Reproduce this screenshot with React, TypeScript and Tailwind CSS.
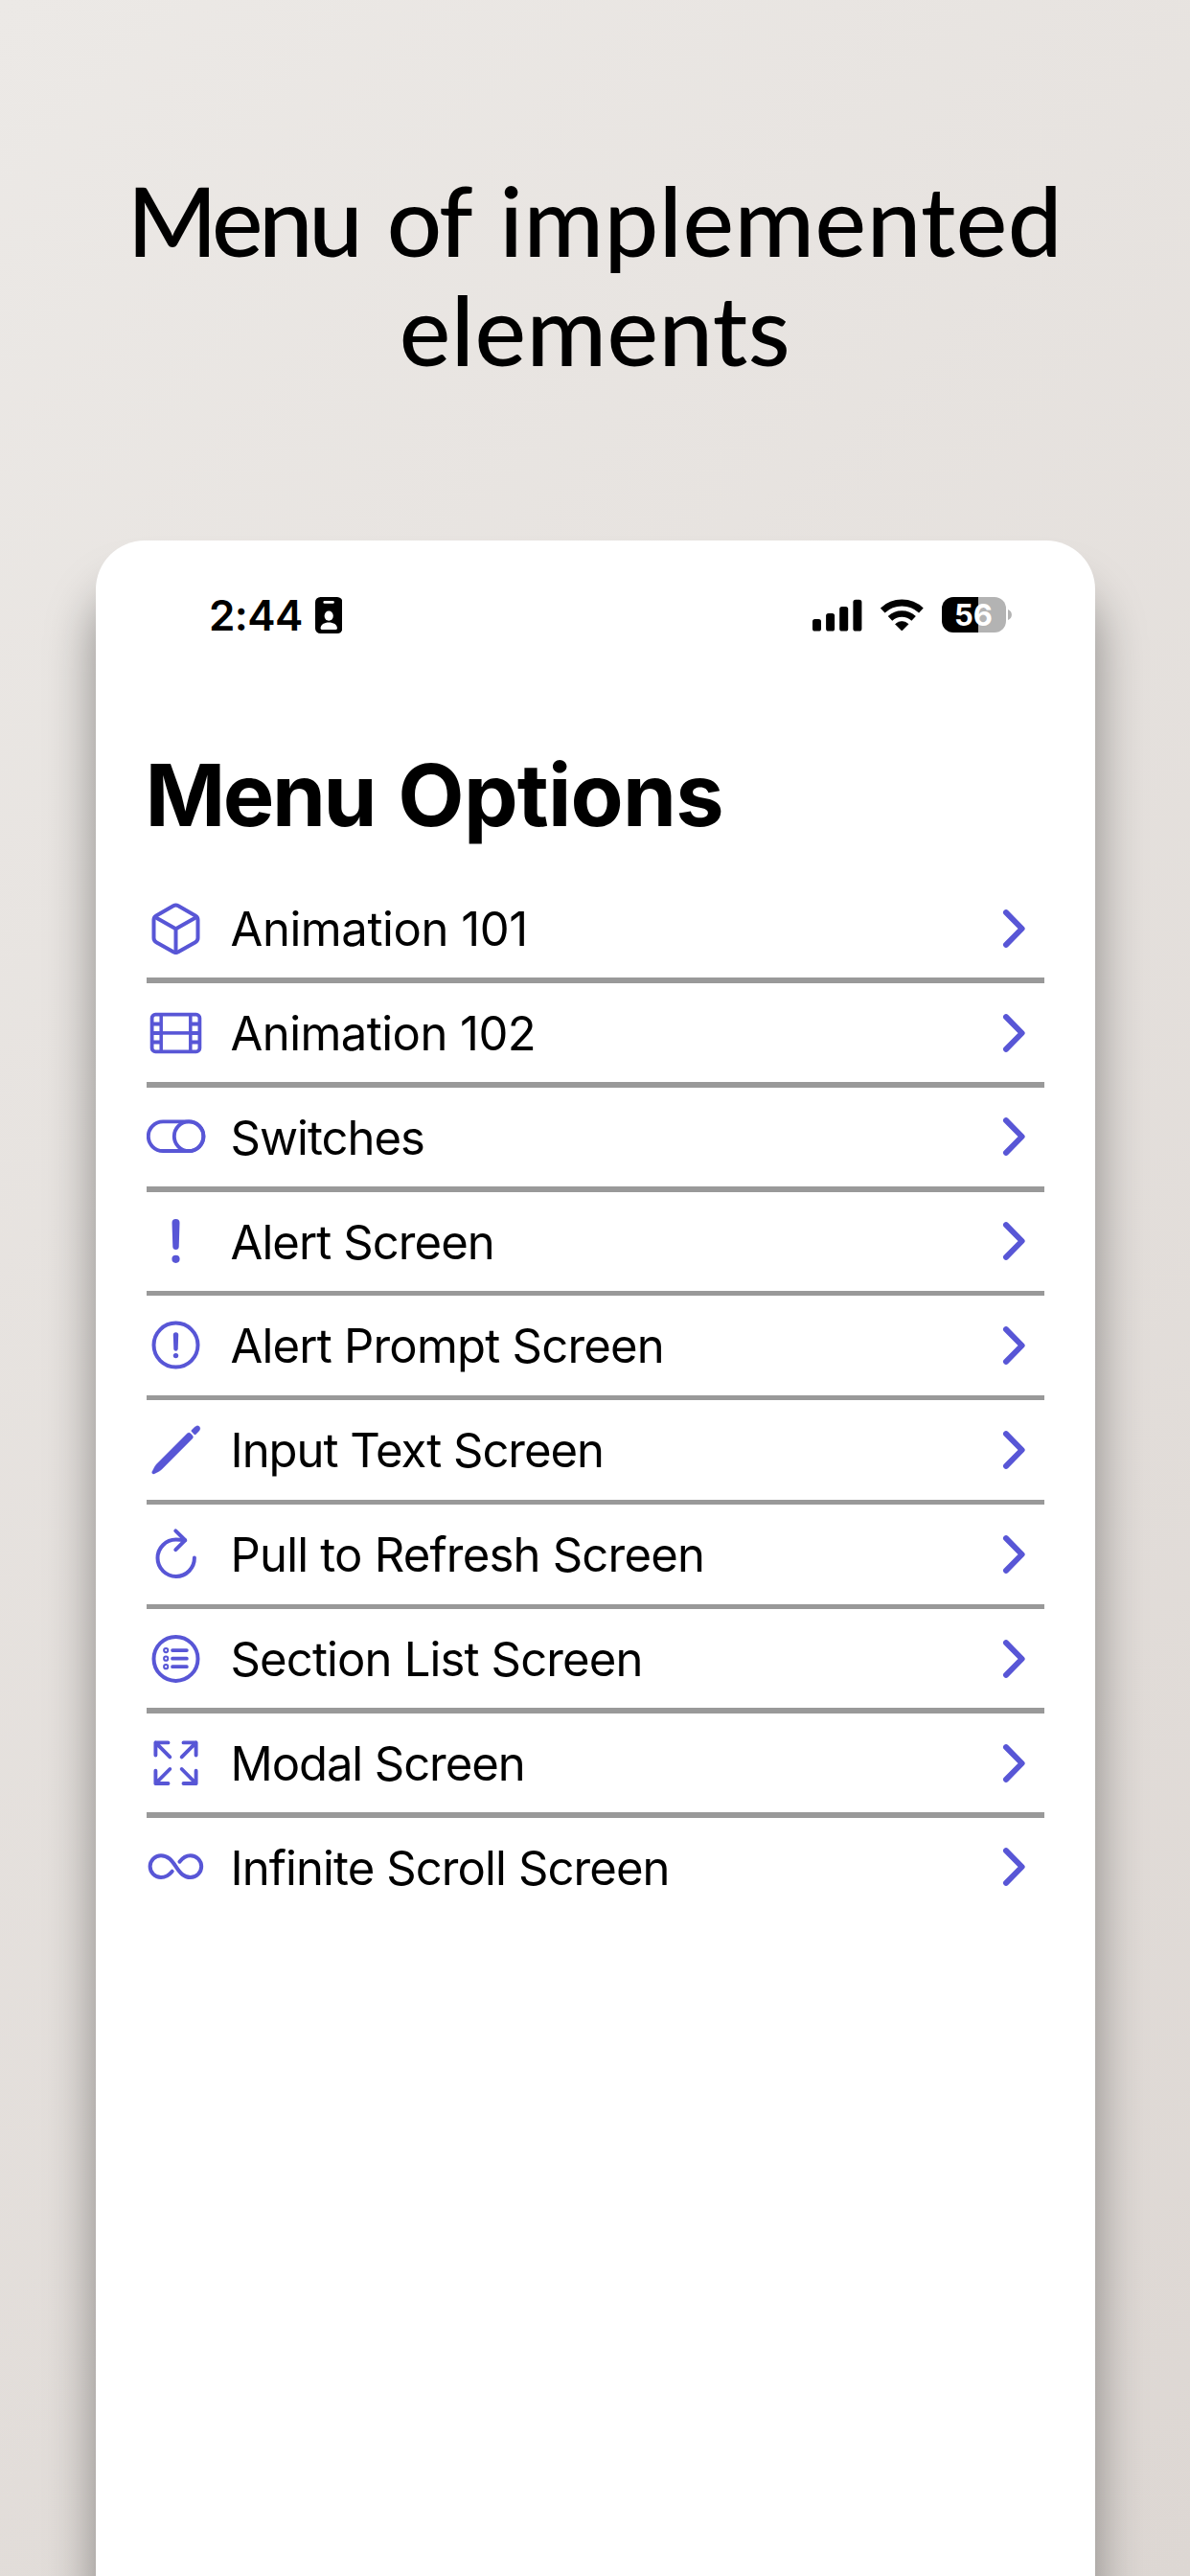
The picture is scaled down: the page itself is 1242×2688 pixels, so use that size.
import type { ReactNode } from "react";

const CubeIcon = () => (
  <g strokeWidth="4" strokeLinejoin="round" strokeLinecap="round">
    <path d="M28.4 7.2Q31 5.7 33.6 7.2L51.4 17.4Q54 18.9 54 21.8V40.8Q54 43.7 51.4 45.2L33.6 55.3Q31 56.7 28.4 55.3L10.6 45.2Q8 43.7 8 40.8V21.8Q8 18.9 10.6 17.4Z" />
    <path d="M9.4 18.9L31 31.3L52.6 18.9M31 31.3V56" />
  </g>
);

const FilmIcon = () => (
  <g>
    <rect x="6.1" y="11.7" width="49.8" height="38.6" rx="3.6" strokeWidth="3.8" />
    <path d="M15.7 12V50M46.3 12V50" strokeWidth="3.5" />
    <path d="M16 30.9H46" strokeWidth="3.6" />
    <path
      d="M6 21.5H16M6 30.9H16M6 40.4H16M46 21.5H56M46 30.9H56M46 40.4H56"
      strokeWidth="4"
    />
  </g>
);

const SwitchIcon = () => (
  <g strokeWidth="3.9">
    <rect x="2.3" y="15.4" width="57.6" height="30.6" rx="15.3" />
    <circle cx="44.6" cy="30.7" r="15.3" />
  </g>
);

const ExclamationIcon = () => (
  <g fill="currentColor" stroke="none">
    <path d="M27 12Q27 8 31 8Q35 8 35 12L34.2 37Q34 40 31 40Q28 40 27.8 37Z" />
    <circle cx="31" cy="49.8" r="4.1" />
  </g>
);

const ExclamationCircleIcon = () => (
  <g>
    <circle cx="31" cy="30.6" r="23" strokeWidth="4" />
    <g fill="currentColor" stroke="none">
      <path d="M28.3 19.8Q28.3 17.2 31 17.2Q33.7 17.2 33.7 19.8L33.2 34.8Q33 36.8 31 36.8Q29 36.8 28.8 34.8Z" />
      <circle cx="31" cy="41.6" r="2.7" />
    </g>
  </g>
);

const PencilIcon = () => (
  <g fill="currentColor" stroke="currentColor" strokeWidth="0.4">
    <path d="M43.2 13.6L11 45.8Q9.5 47.3 8.6 49.3L6.2 54Q5.8 56.3 8.2 55.9L13.2 53.4Q15 52.5 16.5 51L48.4 18.9Q49.6 17.4 48.2 15.8L46.6 14Q44.8 12.3 43.2 13.6Z" />
    <path d="M47.6 10.3L50.6 7.2Q53.5 4.6 55.5 6.5Q57.5 8.8 54.9 11.6L52 14.6Q51 15.3 50.1 14.4L47.7 12Q46.8 11.1 47.6 10.3Z" />
  </g>
);

const RefreshIcon = () => (
  <g strokeWidth="4" strokeLinecap="round" strokeLinejoin="round">
    <path d="M50.4 34.6A19.2 19.2 0 1 1 31.2 15.6Q35 15.6 40.6 16.2" />
    <path d="M30.8 6.4L40.8 16.2L30.8 26.2" />
  </g>
);

const ListCircleIcon = () => (
  <g>
    <circle cx="31" cy="30.9" r="23" strokeWidth="4" />
    <g strokeWidth="2">
      <circle cx="20.7" cy="22.1" r="2.1" />
      <circle cx="20.7" cy="30.7" r="2.1" />
      <circle cx="20.7" cy="39.2" r="2.1" />
    </g>
    <path
      d="M27.5 22.1H42.4M27.5 30.7H42.4M27.5 39.2H42.4"
      strokeWidth="3.7"
      strokeLinecap="round"
    />
  </g>
);

const ExpandIcon = () => (
  <g strokeWidth="3.9" strokeLinecap="round" strokeLinejoin="round">
    <path d="M9.9 22.6V9.4H23M9.9 9.4L24.8 24.4" />
    <path d="M52.1 22.6V9.4H39M52.1 9.4L37.2 24.4" />
    <path d="M9.9 38.8V52H23M9.9 52L24.8 37" />
    <path d="M52.1 38.8V52H39M52.1 52L37.2 37" />
  </g>
);

const InfinityIcon = () => (
  <path
    d="M34.9 25.7C38 21.6 41.5 19.2 46.3 19.2A11.4 11.4 0 0 1 46.3 42C39.3 42 35.5 37.4 31 30.6C26.5 23.8 22.7 19.2 15.5 19.2A11.4 11.4 0 0 0 15.5 42C20.3 42 24 39.6 27.2 35.7"
    strokeWidth="4"
    strokeLinecap="round"
  />
);

type Item = { label: string; icon: ReactNode; tracking: string };

const items: Item[] = [
  { label: "Animation 101", icon: <CubeIcon />, tracking: "tracking-[-0.43px]" },
  { label: "Animation 102", icon: <FilmIcon />, tracking: "tracking-[-0.55px]" },
  { label: "Switches", icon: <SwitchIcon />, tracking: "tracking-[-1px]" },
  { label: "Alert Screen", icon: <ExclamationIcon />, tracking: "tracking-[-0.92px]" },
  { label: "Alert Prompt Screen", icon: <ExclamationCircleIcon />, tracking: "tracking-[-0.79px]" },
  { label: "Input Text Screen", icon: <PencilIcon />, tracking: "tracking-[-1.02px]" },
  { label: "Pull to Refresh Screen", icon: <RefreshIcon />, tracking: "tracking-[-0.79px]" },
  { label: "Section List Screen", icon: <ListCircleIcon />, tracking: "tracking-[-0.86px]" },
  { label: "Modal Screen", icon: <ExpandIcon />, tracking: "tracking-[-1.08px]" },
  { label: "Infinite Scroll Screen", icon: <InfinityIcon />, tracking: "tracking-[-0.9px]" },
];

function StatusBar() {
  return (
    <div className="mt-[45px] flex h-[65px] items-center justify-between pr-[86.5px] pl-[118.5px]">
      <div className="flex items-center">
        <span className="w-[110.5px] text-[44px] leading-none font-semibold tracking-[-0.6px]">
          2:44
        </span>
        <svg width="28.5" height="38" viewBox="0 0 28.5 38">
          <rect width="28.5" height="38" rx="5.5" fill="#000" />
          <rect x="8.4" y="4" width="11.4" height="2.8" rx="1.3" fill="#fff" />
          <ellipse cx="14.2" cy="19.7" rx="4.6" ry="5.1" fill="#fff" />
          <path
            d="M5.6 32.4C5.6 28.6 9.4 26.4 14.2 26.4S22.9 28.6 22.9 32.4Q22.9 34 21.2 34H7.3Q5.6 34 5.6 32.4Z"
            fill="#fff"
          />
        </svg>
      </div>
      <div className="flex items-center gap-[19px]">
        <svg width="52" height="34" viewBox="0 0 52 34">
          <rect x="0" y="21" width="9" height="12.5" rx="2.6" />
          <rect x="14.1" y="15" width="9" height="18.5" rx="2.6" />
          <rect x="28.2" y="8" width="9" height="25.5" rx="2.6" />
          <rect x="42.4" y="0.8" width="9" height="32.7" rx="2.6" />
        </svg>
        <svg width="45" height="34" viewBox="0 0 45 34" fill="none" stroke="#000">
          <path d="M2.2 12A29.3 29.3 0 0 1 42.4 12" strokeWidth="6.8" />
          <path d="M10 20.3A17.9 17.9 0 0 1 34.6 20.3" strokeWidth="6.5" />
          <path
            d="M22.3 33L15.6 26.3A9.6 9.6 0 0 1 29 26.3Z"
            fill="#000"
            strokeWidth="0.8"
            strokeLinejoin="round"
          />
        </svg>
        <div className="flex items-center gap-[2.5px]">
          <div className="flex h-[36.5px] w-[67px] items-center justify-center rounded-[12px] bg-[linear-gradient(90deg,#000_56.5%,#b3b3b3_56.5%)] text-[31px] leading-none font-bold text-white">
            56
          </div>
          <svg width="4" height="11" viewBox="0 0 4 11">
            <path d="M0 0Q3.9 1.8 3.9 5.5T0 11Z" fill="#b3b3b3" />
          </svg>
        </div>
      </div>
    </div>
  );
}

function MenuRow({ item, last }: { item: Item; last: boolean }) {
  return (
    <li>
      <div className="flex h-[103.4px] items-center pr-[19px]">
        <svg
          width="62"
          height="62"
          viewBox="0.5 0 62 62"
          fill="none"
          stroke="currentColor"
          className="shrink-0 text-[#5856d6]"
        >
          {item.icon}
        </svg>
        <span
          className={`ml-[26px] flex-1 pt-[1.5px] text-[49px] leading-none whitespace-nowrap ${item.tracking}`}
        >
          {item.label}
        </span>
        <svg width="25" height="42" viewBox="0 0 25 42" fill="none" className="text-[#5856d6]">
          <path
            d="M4 4.2L20.6 21L4 37.8"
            stroke="currentColor"
            strokeWidth="6"
            strokeLinecap="round"
            strokeLinejoin="round"
          />
        </svg>
      </div>
      {!last && <div className="h-[5.47px] bg-[#999999]" />}
    </li>
  );
}

export default function App() {
  return (
    <div className="flex h-[2688px] w-[1242px] flex-col overflow-hidden bg-[linear-gradient(135deg,#ece9e6,#ddd7d3)] text-black">
      <h1 className="flex flex-col items-center pt-[172px] font-['Lato',sans-serif] text-[101px] leading-[114px] font-medium whitespace-nowrap">
        <span className="[word-spacing:4px]">
          <span className="tracking-[-4.4px]">Menu</span>{" "}
          <span className="tracking-[-2px]">of</span>{" "}
          <span className="tracking-[0.56px]">implemented</span>
        </span>
        <span className="tracking-[0.5px]">elements</span>
      </h1>
      <main className="mx-[99.5px] mt-[164px] flex-1 rounded-t-[51px] bg-white font-['Inter',sans-serif] shadow-[0_52px_52px_rgba(0,0,0,0.4)]">
        <StatusBar />
        <h2 className="mt-[101px] ml-[52px] text-[90px] leading-[110px] font-bold [word-spacing:3px]">
          <span className="tracking-[-2.5px]">Menu</span>{" "}
          <span className="tracking-[-0.8px]">Options</span>
        </h2>
        <ul className="mx-[53px] mt-[32px]">
          {items.map((item, i) => (
            <MenuRow key={item.label} item={item} last={i === items.length - 1} />
          ))}
        </ul>
      </main>
    </div>
  );
}
